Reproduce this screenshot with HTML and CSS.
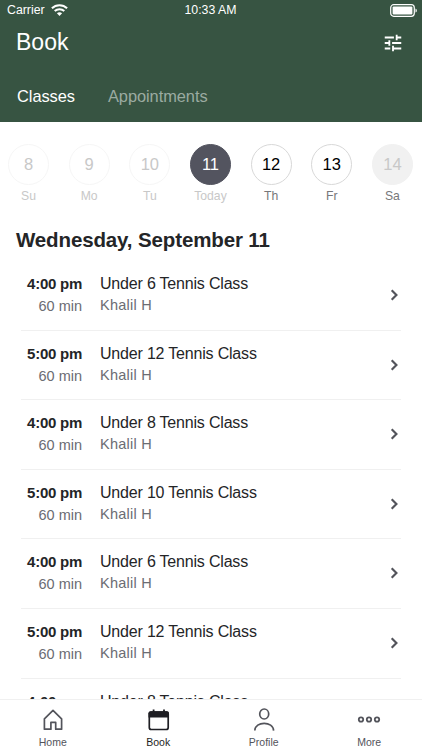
FILE: index.html
```html
<!DOCTYPE html>
<html lang="en">
<head>
  <meta charset="UTF-8">
  <meta name="viewport" content="width=device-width, initial-scale=1.0">
  <title>Book</title>
  <link rel="stylesheet" href="styles.css">
</head>
<body>

  <header class="header">
    <div class="status-bar">
      <div class="carrier">
        <span class="carrier-name">Carrier</span>
        <svg class="wifi" width="17" height="12" viewBox="0 0 17 12" fill="none" stroke="#fff" stroke-width="2">
          <path d="M0.9 4.3C5.1 0.2 11.9 0.2 16.1 4.3"/>
          <path d="M3.7 7.1C6.4 4.6 10.6 4.6 13.3 7.1"/>
          <path d="M8.5 12L5.9 9.3C7.4 8 9.6 8 11.1 9.3Z" fill="#fff" stroke="none"/>
        </svg>
      </div>
      <span class="clock">10:33 AM</span>
      <svg class="battery" width="28" height="13" viewBox="0 0 28 13">
        <rect x="0.7" y="0.7" width="23.6" height="11.6" rx="3" fill="none" stroke="#fff" stroke-width="1.2"/>
        <rect x="2.6" y="2.6" width="19.8" height="7.8" rx="1" fill="#fff"/>
        <path d="M25.5 4.4C27.3 5 27.3 8 25.5 8.6Z" fill="#fff"/>
      </svg>
    </div>

    <div class="title-bar">
      <h1>Book</h1>
      <svg class="filter" width="22" height="22" viewBox="0 0 24 24" fill="#fff">
        <path d="M3 17v2h6v-2H3zM3 5v2h10V5H3zm10 16v-2h8v-2h-8v-2h-2v6h2zM7 9v2H3v2h4v2h2V9H7zm14 4v-2H11v2h10zm-6-4h2V7h4V5h-4V3h-2v6z"/>
      </svg>
    </div>

    <nav class="tabs">
      <a class="tab tab-active">Classes</a>
      <a class="tab">Appointments</a>
    </nav>
  </header>

  <main class="content">
    <div class="days">
      <div class="day past"><span class="num">8</span><span class="name">Su</span></div>
      <div class="day past"><span class="num">9</span><span class="name">Mo</span></div>
      <div class="day past"><span class="num">10</span><span class="name">Tu</span></div>
      <div class="day today"><span class="num">11</span><span class="name">Today</span></div>
      <div class="day"><span class="num">12</span><span class="name">Th</span></div>
      <div class="day"><span class="num">13</span><span class="name">Fr</span></div>
      <div class="day empty"><span class="num">14</span><span class="name">Sa</span></div>
    </div>

    <h2>Wednesday, September 11</h2>

    <ul class="classes">
      <li class="class">
        <div class="when"><b>4:00 pm</b><span>60 min</span></div>
        <div class="what"><p>Under 6 Tennis Class</p><span>Khalil H</span></div>
        <svg class="chevron" width="9" height="12" viewBox="0 0 9 12"><path d="M1.7 1.3L6.4 6L1.7 10.7"/></svg>
      </li>
      <li class="class">
        <div class="when"><b>5:00 pm</b><span>60 min</span></div>
        <div class="what"><p>Under 12 Tennis Class</p><span>Khalil H</span></div>
        <svg class="chevron" width="9" height="12" viewBox="0 0 9 12"><path d="M1.7 1.3L6.4 6L1.7 10.7"/></svg>
      </li>
      <li class="class">
        <div class="when"><b>4:00 pm</b><span>60 min</span></div>
        <div class="what"><p>Under 8 Tennis Class</p><span>Khalil H</span></div>
        <svg class="chevron" width="9" height="12" viewBox="0 0 9 12"><path d="M1.7 1.3L6.4 6L1.7 10.7"/></svg>
      </li>
      <li class="class">
        <div class="when"><b>5:00 pm</b><span>60 min</span></div>
        <div class="what"><p>Under 10 Tennis Class</p><span>Khalil H</span></div>
        <svg class="chevron" width="9" height="12" viewBox="0 0 9 12"><path d="M1.7 1.3L6.4 6L1.7 10.7"/></svg>
      </li>
      <li class="class">
        <div class="when"><b>4:00 pm</b><span>60 min</span></div>
        <div class="what"><p>Under 6 Tennis Class</p><span>Khalil H</span></div>
        <svg class="chevron" width="9" height="12" viewBox="0 0 9 12"><path d="M1.7 1.3L6.4 6L1.7 10.7"/></svg>
      </li>
      <li class="class">
        <div class="when"><b>5:00 pm</b><span>60 min</span></div>
        <div class="what"><p>Under 12 Tennis Class</p><span>Khalil H</span></div>
        <svg class="chevron" width="9" height="12" viewBox="0 0 9 12"><path d="M1.7 1.3L6.4 6L1.7 10.7"/></svg>
      </li>
      <li class="class">
        <div class="when"><b>4:00 pm</b><span>60 min</span></div>
        <div class="what"><p>Under 8 Tennis Class</p><span>Khalil H</span></div>
        <svg class="chevron" width="9" height="12" viewBox="0 0 9 12"><path d="M1.7 1.3L6.4 6L1.7 10.7"/></svg>
      </li>
    </ul>
  </main>

  <nav class="bottom-nav">
    <a class="nav-item">
      <svg width="24" height="24" viewBox="0 0 24 24" fill="none" stroke="#53545b" stroke-width="1.7" stroke-linejoin="round">
        <path d="M3.4 21.2V10.8L12 2.4L20.6 10.8V21.2H14.7V14.4H9.9V21.2Z"/>
      </svg>
      <span>Home</span>
    </a>
    <a class="nav-item nav-active">
      <svg width="24" height="24" viewBox="0 0 24 24" fill="none" stroke="#1f1f24">
        <rect x="3.3" y="4" width="18.9" height="17.5" rx="2" stroke-width="1.7"/>
        <path d="M2.5 9.5V5.3Q2.5 3.3 4.5 3.3H21Q23 3.3 23 5.3V9.5Z" fill="#1f1f24" stroke="none"/>
        <path d="M7.6 1.4V5M18 1.4V5" stroke-width="1.8"/>
      </svg>
      <span>Book</span>
    </a>
    <a class="nav-item">
      <svg width="24" height="24" viewBox="0 0 24 24" fill="none" stroke="#53545b" stroke-width="1.7">
        <ellipse cx="12.2" cy="6" rx="4.5" ry="5"/>
        <path d="M2.8 22.6C3 12.9 21.3 12.9 21.6 22.6"/>
      </svg>
      <span>Profile</span>
    </a>
    <a class="nav-item">
      <svg width="24" height="24" viewBox="0 0 24 24" fill="none" stroke="#53545b" stroke-width="1.8">
        <circle cx="4" cy="11.5" r="2.2"/>
        <circle cx="12" cy="11.5" r="2.2"/>
        <circle cx="20" cy="11.5" r="2.2"/>
      </svg>
      <span>More</span>
    </a>
  </nav>

</body>
</html>
```

FILE: styles.css
```css
* {
  box-sizing: border-box;
  margin: 0;
  padding: 0;
}
body {
  font-family: "Liberation Sans", Arial, sans-serif;
  height: 750px;
  display: flex;
  flex-direction: column;
  overflow: hidden;
  background: #fff;
  color: #242527;
}
svg {
  display: block;
  flex: none;
}
.header {
  flex: none;
  height: 122px;
  background: #375442;
  color: #fff;
}
.status-bar {
  display: grid;
  grid-template-columns: 1fr auto 1fr;
  align-items: center;
  height: 20px;
  padding: 0 4px 0 7px;
  font-size: 12.3px;
}
.carrier {
  display: flex;
  align-items: center;
  gap: 6px;
}
.clock {
  margin-right: 4px;
  font-size: 12.3px;
}
.battery {
  justify-self: end;
}
.title-bar {
  display: flex;
  justify-content: space-between;
  align-items: center;
  height: 45px;
  padding: 0 18px 0 16px;
}
h1 {
  font-size: 23px;
  font-weight: normal;
}
.tabs {
  display: flex;
  gap: 33px;
  padding: 22px 17px 0;
  font-size: 16.4px;
  line-height: 18px;
  letter-spacing: -0.05px;
}
.tab {
  color: #9baba1;
}
.tab-active {
  color: #fff;
}
.content {
  flex: 1;
  min-height: 0;
  overflow: hidden;
}
.days {
  display: flex;
  justify-content: space-between;
  padding: 22px 9px 0 8px;
}
.day {
  display: flex;
  flex-direction: column;
  align-items: center;
  width: 41px;
}
.num {
  width: 41px;
  height: 41px;
  line-height: 39px;
  text-align: center;
  border: 1px solid #d8d8d8;
  border-radius: 50%;
  font-size: 16.5px;
  color: #000;
}
.name {
  margin-top: 3px;
  font-size: 12.2px;
  line-height: 16px;
  color: #77777a;
}
.past .num {
  border-color: #f6f6f6;
  color: #c8c8c8;
}
.past .name,
.today .name {
  color: #c8c8c8;
}
.today .num {
  background: #53545f;
  border-color: #53545f;
  color: #fff;
}
.empty .num {
  background: #f1f1f1;
  border-color: #f1f1f1;
  color: #c8c8c8;
}
h2 {
  margin: 24px 16px 0;
  font-size: 20.5px;
  line-height: 24px;
  letter-spacing: -0.13px;
}
.classes {
  list-style: none;
  margin: 9px 21px 0;
}
.class {
  display: flex;
  height: 69.6px;
  padding-top: 13px;
  border-bottom: 1px solid #f0f0f0;
}
.when {
  display: flex;
  flex-direction: column;
  width: 61px;
  text-align: right;
  font-size: 15px;
}
.when b {
  line-height: 20px;
  letter-spacing: -0.25px;
}
.when span {
  margin-top: 2px;
  line-height: 20px;
  font-size: 14.5px;
  color: #6b6c73;
}
.what {
  flex: 1;
  margin-left: 18px;
  font-size: 16px;
}
.what p {
  line-height: 20px;
  letter-spacing: -0.19px;
}
.what span {
  display: block;
  margin-top: 1px;
  line-height: 20px;
  font-size: 14.5px;
  letter-spacing: 0.25px;
  color: #6b6c73;
}
.chevron {
  margin: 15px 2px 0 0;
  fill: none;
  stroke: #53545b;
  stroke-width: 2.2;
}
.bottom-nav {
  flex: none;
  display: flex;
  height: 51px;
  border-top: 1px solid #f0f0f0;
  background: #fff;
}
.nav-item {
  flex: 1;
  display: flex;
  flex-direction: column;
  align-items: center;
  padding-top: 8px;
  font-size: 10.5px;
  line-height: 12px;
  color: #53545b;
}
.nav-item span {
  margin-top: 4px;
}
.nav-active {
  color: #1f1f24;
}
```
